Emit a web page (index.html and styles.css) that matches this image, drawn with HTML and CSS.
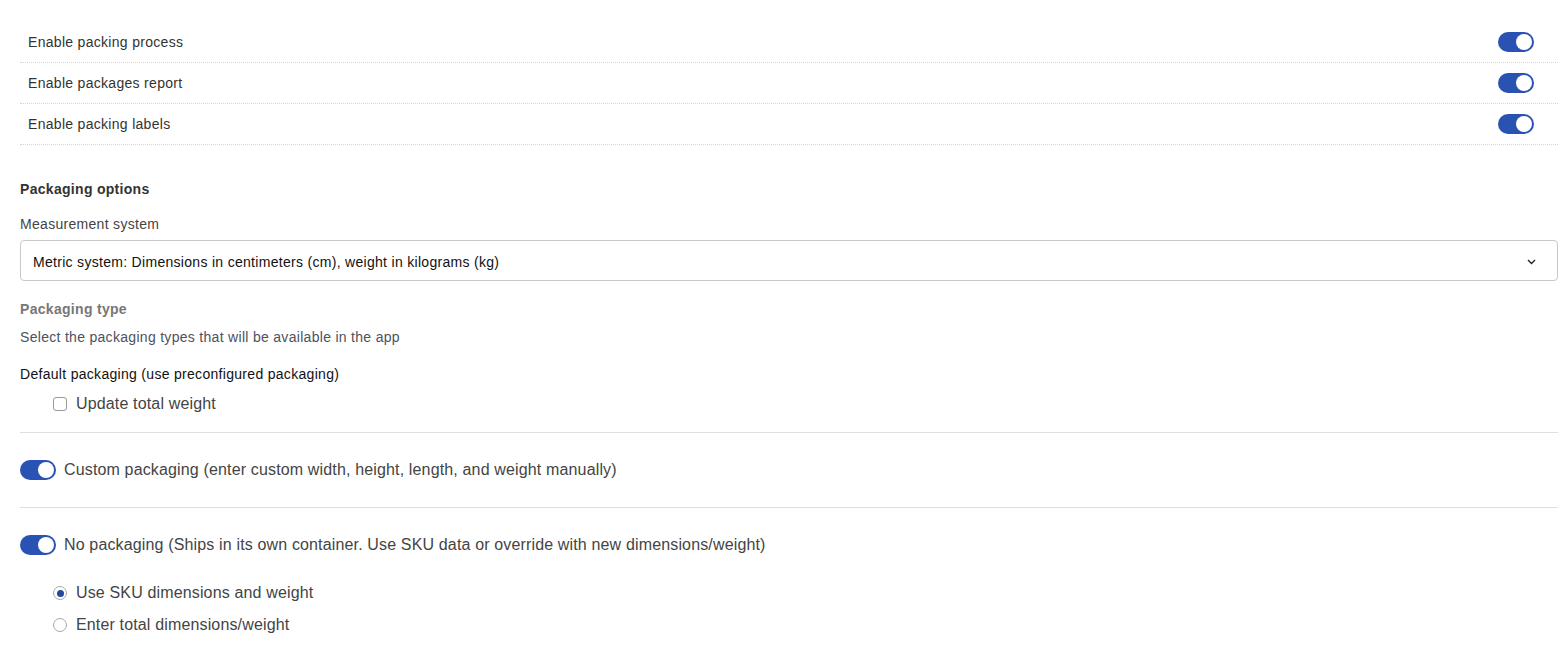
FILE: index.html
```html
<!DOCTYPE html>
<html lang="en">
<head>
<meta charset="utf-8">
<title>Packing settings</title>
<link rel="stylesheet" href="styles.css">
</head>
<body>
<div class="settings">
  <div class="toggle-row">
    <span class="row-label">Enable packing process</span>
    <span class="switch on"><span class="knob"></span></span>
  </div>
  <div class="toggle-row">
    <span class="row-label">Enable packages report</span>
    <span class="switch on"><span class="knob"></span></span>
  </div>
  <div class="toggle-row">
    <span class="row-label">Enable packing labels</span>
    <span class="switch on"><span class="knob"></span></span>
  </div>

  <div class="section-title">Packaging options</div>
  <div class="field-label">Measurement system</div>
  <div class="select">
    <span class="select-text">Metric system: Dimensions in centimeters (cm), weight in kilograms (kg)</span>
    <svg class="chevron" width="9" height="6" viewBox="0 0 9 6"><path d="M1 1l3.5 3.5L8 1" fill="none" stroke="#222" stroke-width="1.4"/></svg>
  </div>

  <div class="type-title">Packaging type</div>
  <div class="type-help">Select the packaging types that will be available in the app</div>

  <div class="default-title">Default packaging (use preconfigured packaging)</div>
  <div class="option-line check-line">
    <span class="checkbox"></span>
    <span class="option-text">Update total weight</span>
  </div>

  <div class="divider"></div>

  <div class="pack-toggle">
    <span class="switch on"><span class="knob"></span></span>
    <span class="option-text">Custom packaging (enter custom width, height, length, and weight manually)</span>
  </div>

  <div class="divider"></div>

  <div class="pack-toggle">
    <span class="switch on"><span class="knob"></span></span>
    <span class="option-text">No packaging (Ships in its own container. Use SKU data or override with new dimensions/weight)</span>
  </div>

  <div class="option-line radio-line first-radio">
    <span class="radio checked"></span>
    <span class="option-text">Use SKU dimensions and weight</span>
  </div>
  <div class="option-line radio-line">
    <span class="radio"></span>
    <span class="option-text">Enter total dimensions/weight</span>
  </div>
</div>
</body>
</html>
```

FILE: styles.css
```css
* { box-sizing: border-box; }
html, body { margin: 0; padding: 0; background: #fff; }
body {
  font-family: "Liberation Sans", Arial, Helvetica, sans-serif;
  color: #333;
  letter-spacing: 0.3px;
}
.settings {
  padding: 22px 7px 0 20px;
}
.toggle-row {
  display: flex;
  justify-content: space-between;
  align-items: center;
  height: 41px;
  padding: 0 24px 0 8px;
  border-bottom: 1px dotted #d6d6d6;
}
.row-label {
  font-size: 14px;
  line-height: 20px;
  color: #333;
}
.switch {
  display: inline-flex;
  align-items: center;
  width: 36px;
  height: 20px;
  border-radius: 10px;
  background: #2a52b3;
  padding: 2px;
  flex: 0 0 auto;
  justify-content: flex-end;
}
.knob {
  width: 16px;
  height: 16px;
  border-radius: 50%;
  background: #fff;
}
.section-title {
  margin-top: 34px;
  font-size: 14px;
  line-height: 20px;
  font-weight: bold;
  color: #333;
}
.field-label {
  margin-top: 15px;
  font-size: 14px;
  line-height: 20px;
  color: #444;
}
.select {
  margin-top: 6px;
  height: 41px;
  border: 1px solid #c8c8c8;
  border-radius: 4px;
  display: flex;
  align-items: center;
  justify-content: space-between;
  padding: 2px 21px 0 12px;
}
.select-text {
  font-size: 14px;
  color: #111;
}
.chevron { display: block; }
.type-title {
  margin-top: 18px;
  font-size: 14px;
  line-height: 20px;
  font-weight: bold;
  color: #777;
}
.type-help {
  margin-top: 8px;
  font-size: 14px;
  line-height: 20px;
  color: #4b5260;
}
.default-title {
  margin-top: 17px;
  font-size: 14px;
  line-height: 20px;
  color: #111;
}
.option-line {
  display: flex;
  align-items: center;
  gap: 9px;
  padding-left: 33px;
  height: 22px;
}
.check-line { margin-top: 9px; }
.option-text {
  font-size: 16px;
  line-height: 22px;
  color: #444;
  letter-spacing: 0.15px;
}
.checkbox {
  width: 14px;
  height: 14px;
  border: 1px solid #9a9a9a;
  border-radius: 3px;
  background: #fff;
}
.divider {
  margin-top: 17px;
  height: 1px;
  background: #dedee3;
}
.pack-toggle {
  display: flex;
  align-items: center;
  gap: 8px;
  margin-top: 26px;
  margin-bottom: 26px;
}
.first-radio { margin-top: 1px; }
.radio-line + .radio-line { margin-top: 10px; }
.radio {
  width: 14px;
  height: 14px;
  border: 1px solid #a8a8a8;
  border-radius: 50%;
  display: flex;
  align-items: center;
  justify-content: center;
}
.radio.checked::after {
  content: "";
  width: 7px;
  height: 7px;
  border-radius: 50%;
  background: #24479f;
}
```
